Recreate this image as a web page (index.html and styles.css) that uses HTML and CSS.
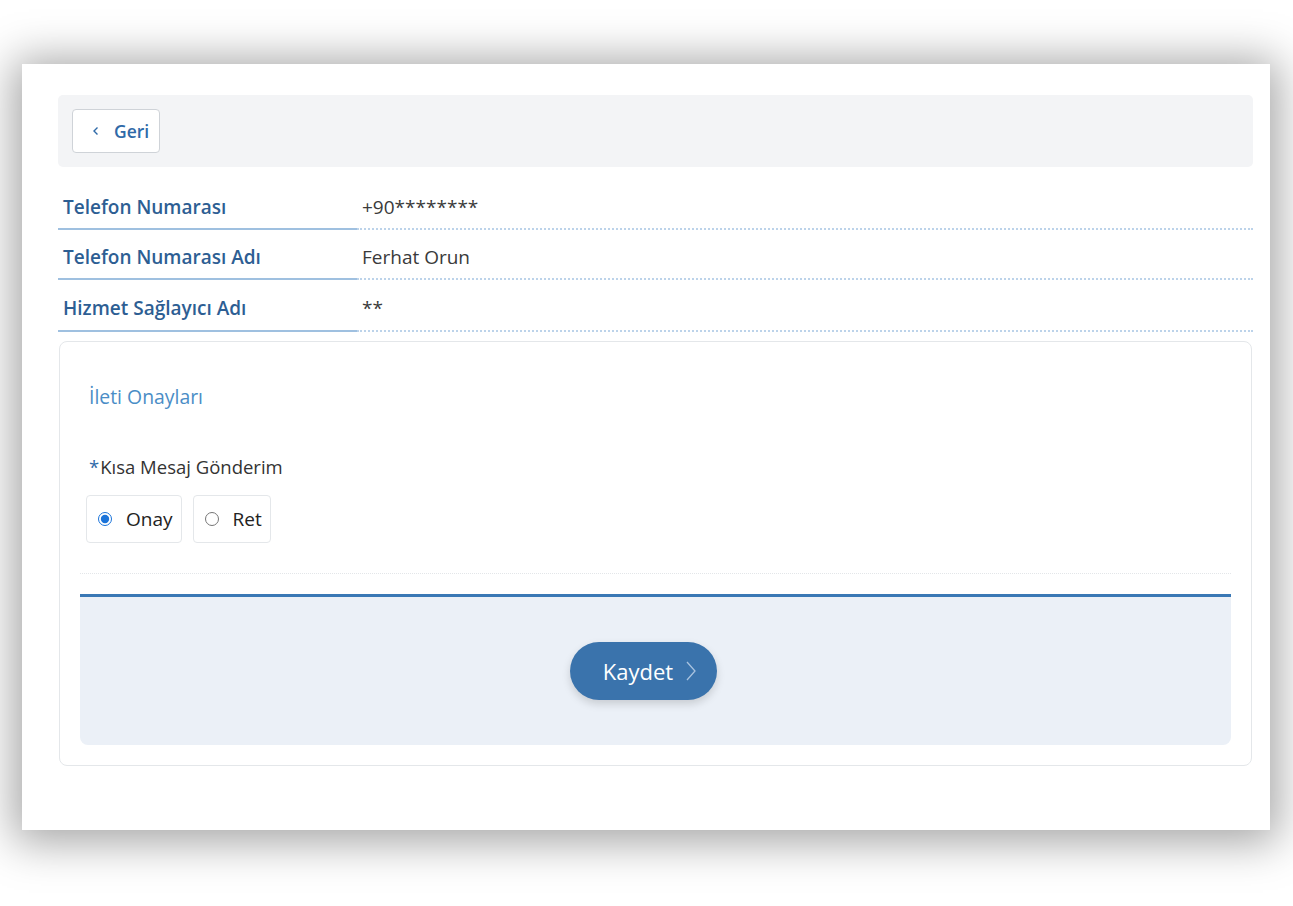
FILE: index.html
```html
<!DOCTYPE html>
<html lang="tr">
<head>
    <meta charset="UTF-8">
    <meta name="viewport" content="width=device-width, initial-scale=1.0">
    <title>İleti Onayları</title>
    <link rel="stylesheet" href="styles.css">
</head>
<body>
    <div class="page">
        <div class="toolbar">
            <button class="back-btn">
                <svg width="10" height="10" viewBox="0 0 10 10"><path d="M6.5 1.5 L3 5 L6.5 8.5" fill="none" stroke="#2f6aa8" stroke-width="1.4"/></svg>
                Geri
            </button>
        </div>

        <div class="info">
            <div class="info-row">
                <div class="info-label">Telefon Numarası</div>
                <div class="info-value">+90********</div>
            </div>
            <div class="info-row">
                <div class="info-label">Telefon Numarası Adı</div>
                <div class="info-value">Ferhat Orun</div>
            </div>
            <div class="info-row">
                <div class="info-label">Hizmet Sağlayıcı Adı</div>
                <div class="info-value">**</div>
            </div>
        </div>

        <div class="panel">
            <div class="panel-title">İleti Onayları</div>
            <div class="field-label"><span class="req">*</span>Kısa Mesaj Gönderim</div>
            <div class="choices">
                <label class="choice"><input type="radio" name="sms" checked> Onay</label>
                <label class="choice"><input type="radio" name="sms"> Ret</label>
            </div>
            <div class="separator"></div>
            <div class="actions">
                <button class="save-btn">
                    Kaydet
                    <svg width="12" height="22" viewBox="0 0 12 22"><path d="M2 2 L10 11 L2 20" fill="none" stroke="#a9c3df" stroke-width="1.3"/></svg>
                </button>
            </div>
        </div>
    </div>
</body>
</html>
```

FILE: styles.css
```css
* {
    box-sizing: border-box;
    margin: 0;
    padding: 0;
}
body {
    background-color: white;
    font-family: 'Open Sans', 'Noto Sans', sans-serif;
    color: #333;
    padding: 64px 23px 76px 22px;
}
.page {
    background-color: white;
    height: 766px;
    padding: 31px 17px 0 36px;
    box-shadow: 0 4px 42px 8px rgba(0, 0, 0, 0.36);
}
.toolbar {
    background-color: #f3f4f6;
    border-radius: 5px;
    height: 72px;
    padding: 14px;
}
.back-btn {
    display: flex;
    align-items: center;
    gap: 13px;
    height: 44px;
    padding: 0 10px 0 18px;
    background-color: white;
    border: 1px solid #cfd3d8;
    border-radius: 4px;
    font-family: inherit;
    font-size: 17.5px;
    font-weight: 600;
    color: #2f6aa8;
}
.info {
    margin-top: 13px;
}
.info-row {
    display: flex;
    height: 50px;
}
.info-row:last-child {
    height: 52px;
}
.info-label {
    width: 299px;
    padding: 6px 5px 0;
    display: flex;
    align-items: center;
    font-size: 19px;
    font-weight: 600;
    color: #2d5e93;
    border-bottom: 2px solid #9fc0e0;
}
.info-value {
    flex: 1;
    padding: 6px 5px 0;
    display: flex;
    align-items: center;
    font-size: 19px;
    color: #3a3a3a;
    border-bottom: 2px dotted #bcd3ea;
}
.panel {
    margin-top: 9px;
    margin-left: 1px;
    margin-right: 1px;
    border: 1px solid #e4e7ea;
    border-radius: 8px;
    padding: 0 20px 20px 20px;
}
.panel-title {
    margin-top: 42px;
    padding-left: 9px;
    font-size: 19.4px;
    line-height: 26px;
    color: #4a8dc6;
}
.field-label {
    margin-top: 44px;
    padding-left: 9px;
    font-size: 18.5px;
    line-height: 26px;
    color: #333;
}
.req {
    color: #2f6aa8;
    margin-right: 1px;
}
.choices {
    display: flex;
    gap: 11px;
    margin-top: 15px;
    padding-left: 6px;
}
.choice {
    display: flex;
    align-items: center;
    gap: 14px;
    height: 48px;
    padding: 0 8px 0 11px;
    border: 1px solid #e4e7ea;
    border-radius: 4px;
    font-size: 19px;
    color: #222;
}
.choice input {
    width: 14px;
    height: 14px;
    margin: 0;
    accent-color: #1a73d9;
}
.separator {
    margin-top: 30px;
    border-top: 1px dotted #e3e6e9;
}
.actions {
    margin-top: 20px;
    background-color: #ebf0f7;
    border-top: 3px solid #3a78b5;
    border-radius: 0 0 8px 8px;
    height: 151px;
    display: flex;
    justify-content: center;
    align-items: center;
}
.save-btn {
    display: flex;
    align-items: center;
    gap: 12px;
    margin-right: 24px;
    height: 58px;
    padding: 0 20px 0 33px;
    background-color: #3a73ac;
    border: none;
    border-radius: 29px;
    box-shadow: 0 4px 8px rgba(0, 0, 0, 0.15);
    font-family: inherit;
    font-size: 22px;
    color: white;
}
```
